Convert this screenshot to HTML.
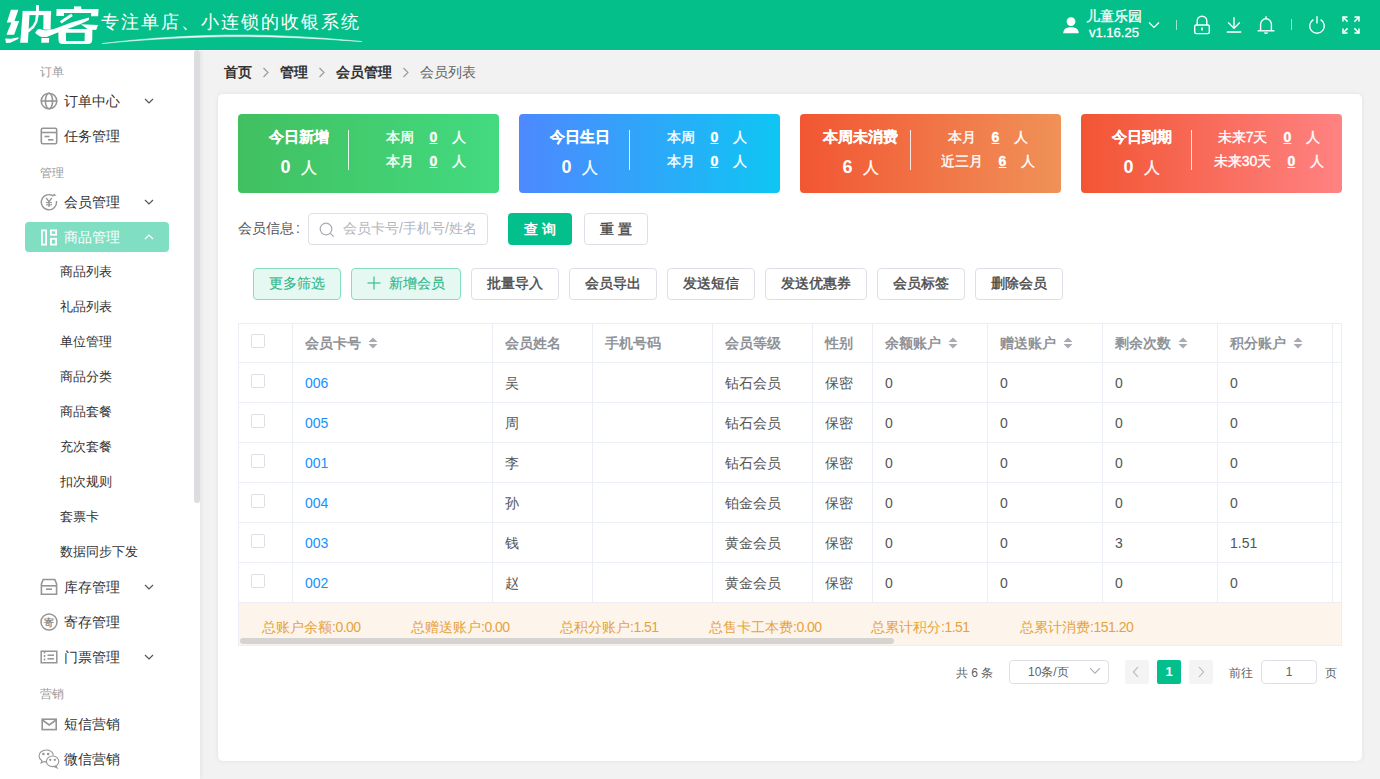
<!DOCTYPE html>
<html><head><meta charset="utf-8">
<style>
*{box-sizing:border-box;margin:0;padding:0}
html,body{width:1380px;height:779px;overflow:hidden;background:#f2f2f2;font-family:"Liberation Sans",sans-serif;color:#333}
div,span,svg{position:absolute}
span.i{position:static}
#hdr{left:0;top:0;width:1380px;height:50px;background:#05bf8a}
#side{left:0;top:50px;width:200px;height:729px;background:#fff;box-shadow:1px 0 4px rgba(0,0,0,.07)}
#sbar{left:194px;top:50px;width:6px;height:453px;background:#dcdde0;border-radius:3px}
.sec{left:40px;font-size:12px;color:#999;line-height:12px;white-space:nowrap}
.mt{left:64px;font-size:14px;color:#333;line-height:14px;white-space:nowrap}
.sub{left:60px;font-size:13px;color:#333;line-height:13px;white-space:nowrap}
#card{left:218px;top:94px;width:1144px;height:667px;background:#fff;border-radius:5px;box-shadow:0 0 5px rgba(0,0,0,.07)}
.stat{top:114px;width:261px;height:79px;border-radius:4px;color:#fff}
.stat .l1{left:0;width:121px;text-align:center;top:14.5px;font-size:15px;font-weight:bold;line-height:15px;white-space:nowrap;-webkit-text-stroke:0.15px #fff}
.stat .l2{left:0;width:121px;text-align:center;top:45px;font-size:17px;line-height:17px;white-space:nowrap}
.stat .l2 b{font-size:18px}
.stat .l2 span{position:static;font-size:16px;margin-left:10px;-webkit-text-stroke:0.3px #fff}
.stat .dv{left:110px;top:16px;width:1px;height:40px;background:rgba(255,255,255,.85)}
.stat .r{left:111px;width:154px;font-size:14px;line-height:14px;text-align:center;white-space:nowrap;-webkit-text-stroke:0.35px #fff}
.stat u{position:static;text-decoration:underline;font-weight:bold;display:inline-block;margin:0 15px 0 16px}
.btn{top:268px;height:32px;border:1px solid #dcdfe6;border-radius:4px;background:#fff;font-size:14px;color:#4a4a4a;text-align:center;line-height:29px;font-weight:400;-webkit-text-stroke:0.4px currentColor;white-space:nowrap}
.btn.g{background:#e6f8f2;border-color:#86ddbf;color:#2db587;-webkit-text-stroke:0.1px currentColor}
.cell{font-size:14px;line-height:14px;white-space:nowrap;color:#555}
.hd{font-size:14px;line-height:14px;white-space:nowrap;color:#8f9297;font-weight:bold}
.hl{height:1px;background:#ebeef5}
.vl{width:1px;background:#ebeef5}
.cb{width:14px;height:14px;border:1px solid #dcdfe6;border-radius:2px;background:#fff}
.ft{top:620px;font-size:14px;line-height:14px;color:#e6a23c;white-space:nowrap}
</style></head><body>
<div id="side"></div>
<div id="hdr"></div>
<div style="left:200px;top:50px;width:1180px;height:1px;background:#fbf5f7"></div>
<div id="sbar"></div>
<div id="card"></div>


<!-- HEADER -->
<svg style="left:0;top:0" width="100" height="50" viewBox="0 0 100 50"><g fill="#fff">
<polygon points="10.9,9.7 18.4,9.7 14.5,20.9 19.2,20.9 14.1,34.8 6.4,34.8 11.4,22.4 6.8,22.4"/>
<polygon points="5.2,38.5 10.9,38.7 18.8,37.3 18.2,38.9 10.3,42.7 6,42.9"/>
<polygon points="22.8,10.9 29.7,10.9 27.9,42.7 20.2,42.7"/>
<rect x="22.8" y="10.9" width="28.3" height="4.2"/>
<rect x="36.1" y="5" width="2.8" height="6"/>
<polygon points="35.8,15.1 38.7,15.1 37.4,22.1 33.9,28 28.3,32.7 28,29.7 32.7,25.6 35.1,20.9"/>
<polygon points="43.5,15 50.9,15 50.6,29.8 43.3,29.5"/>
<polygon points="41.4,38.1 49.2,38.1 48.9,42.7 41.3,42.7"/>
<path d="M35.1,32.8 C36.5,30.5 37.8,28.9 39,28.9 C41,29.2 43.5,30.3 46,30.2 C50,30 53,29.2 56,28.2 L70.6,22.7 L88.9,17.4 L88.9,20.1 L80.7,24 L67.5,28.9 L58.4,32.3 L46.7,36.9 C44,37.3 42,37 40.1,36.4 C38,35.5 36.5,34.3 35.1,32.8 Z"/>
<rect x="74" y="6.4" width="7.2" height="3.3"/>
<polygon points="56.6,9.1 98.5,9.1 98.2,16.2 91.1,16.2 91.1,12.9 63.9,12.9 63.9,15.9 56.3,15.9"/>
<polygon points="59.8,21.2 71.1,13.8 72.8,15.9 61.5,23.5"/>
<polygon points="80.7,24.3 98,25 96.2,30 88.5,29.6 86.5,28.3"/>
<path fill-rule="evenodd" d="M58.3,32.3 L65.5,28.9 L92.4,28.9 L92.2,40 Q92,44 88,44 L62.5,44 Q58.6,44 58.5,40 Z M65.9,32.8 L84.8,32.8 L84.6,41 L66.1,41 Z"/>
</g></svg>
<div style="left:101px;top:12px;font-family:'Liberation Serif',serif;font-size:18px;line-height:20px;color:#fff;white-space:nowrap;letter-spacing:2px">专注单店、小连锁的收银系统</div>
<svg style="left:0;top:0" width="400" height="50" viewBox="0 0 400 50"><path d="M102,43.6 C150,37.5 200,35 240,35 C290,35.2 330,38.5 362,41.6 C330,39.4 290,36.6 240,36.6 C200,36.6 150,38.8 102,43.6 Z" fill="#fff" stroke="#fff" stroke-width="0.5" opacity=".92"/></svg>

<svg style="left:1063px;top:17px" width="16" height="17" viewBox="0 0 16 17" fill="#fff"><circle cx="8" cy="4.6" r="4.4"/><path d="M0.3 16.2 C0.3 12.2 3 10.2 8 10.2 C13 10.2 15.7 12.2 15.7 16.2 Z"/></svg>
<div style="left:1086px;top:9px;font-size:14px;line-height:14px;color:#fff;white-space:nowrap;-webkit-text-stroke:0.3px #fff">儿童乐园</div>
<div style="left:1089px;top:26px;font-size:13px;line-height:13px;color:#fff;white-space:nowrap;-webkit-text-stroke:0.3px #fff">v1.16.25</div>
<svg style="left:1148px;top:21px" width="12" height="8" viewBox="0 0 12 8" fill="none" stroke="#fff" stroke-width="1.2"><polyline points="1,1.5 6,6.5 11,1.5"/></svg>
<div style="left:1176px;top:20px;width:1px;height:10px;background:rgba(255,255,255,.6)"></div>
<svg style="left:1193px;top:15px" width="18" height="20" viewBox="0 0 18 20" fill="none" stroke="#fff" stroke-width="1.4"><path d="M4.2 10 V6 A4.8 4.8 0 0 1 13.8 6 V10"/><rect x="1.7" y="10" width="14.6" height="8.6" rx="1.6"/><line x1="9" y1="12.6" x2="9" y2="15.6" stroke-width="1.6"/></svg>
<svg style="left:1225px;top:16px" width="18" height="18" viewBox="0 0 18 18" fill="none" stroke="#fff" stroke-width="1.4"><line x1="9" y1="1.2" x2="9" y2="12"/><polyline points="3.2,6.6 9,12.2 14.8,6.6"/><line x1="1.8" y1="16" x2="16.2" y2="16" stroke-width="1.6"/></svg>
<svg style="left:1256px;top:15px" width="20" height="20" viewBox="0 0 20 20" fill="none" stroke="#fff" stroke-width="1.4"><path d="M4.6 15.6 V9.2 A5.4 5.4 0 0 1 15.4 9.2 V15.6"/><line x1="1.6" y1="15.8" x2="18.4" y2="15.8"/><path d="M8.4 17.4 Q10 19 11.6 17.4" /><line x1="10" y1="1.2" x2="10" y2="3.6"/></svg>
<div style="left:1291px;top:19px;width:1px;height:11px;background:rgba(255,255,255,.6)"></div>
<svg style="left:1307px;top:15px" width="20" height="20" viewBox="0 0 20 20" fill="none" stroke="#fff" stroke-width="1.4"><path d="M6.4 4.6 A7.3 7.3 0 1 0 13.6 4.6"/><line x1="10" y1="1.2" x2="10" y2="8.6"/></svg>
<svg style="left:1342px;top:16px" width="18" height="18" viewBox="0 0 18 18" fill="none" stroke="#fff" stroke-width="1.5"><polyline points="1,5.5 1,1 5.5,1"/><line x1="1" y1="1" x2="5.6" y2="5.6"/><polyline points="12.5,1 17,1 17,5.5"/><line x1="17" y1="1" x2="12.4" y2="5.6"/><polyline points="1,12.5 1,17 5.5,17"/><line x1="1" y1="17" x2="5.6" y2="12.4"/><polyline points="12.5,17 17,17 17,12.5"/><line x1="17" y1="17" x2="12.4" y2="12.4"/></svg>


<!-- CRUMB -->
<div style="left:224px;top:65px;font-size:14px;line-height:14px;white-space:nowrap;color:#333;font-weight:bold">首页</div>
<svg style="left:262px;top:67px" width="8" height="11" viewBox="0 0 8 11" fill="none" stroke="#999" stroke-width="1.1"><polyline points="1.5,1 6,5.5 1.5,10"/></svg>
<div style="left:280px;top:65px;font-size:14px;line-height:14px;white-space:nowrap;color:#333;font-weight:bold">管理</div>
<svg style="left:318px;top:67px" width="8" height="11" viewBox="0 0 8 11" fill="none" stroke="#999" stroke-width="1.1"><polyline points="1.5,1 6,5.5 1.5,10"/></svg>
<div style="left:336px;top:65px;font-size:14px;line-height:14px;white-space:nowrap;color:#333;font-weight:bold">会员管理</div>
<svg style="left:402px;top:67px" width="8" height="11" viewBox="0 0 8 11" fill="none" stroke="#999" stroke-width="1.1"><polyline points="1.5,1 6,5.5 1.5,10"/></svg>
<div style="left:420px;top:65px;font-size:14px;line-height:14px;white-space:nowrap;color:#666">会员列表</div>

<!-- STATS -->
<div class="stat" style="left:238px;background:linear-gradient(90deg,#41c060,#43da80)">
<div class="l1">今日新增</div>
<div class="l2"><b>0</b><span>人</span></div>
<div class="dv"></div>
<div class="r" style="top:16px">本周<u>0</u>人</div>
<div class="r" style="top:40px">本月<u>0</u>人</div>
</div>
<div class="stat" style="left:519px;background:linear-gradient(90deg,#4e88ff,#0ec6f3)">
<div class="l1">今日生日</div>
<div class="l2"><b>0</b><span>人</span></div>
<div class="dv"></div>
<div class="r" style="top:16px">本周<u>0</u>人</div>
<div class="r" style="top:40px">本月<u>0</u>人</div>
</div>
<div class="stat" style="left:800px;background:linear-gradient(90deg,#f25633,#f09158)">
<div class="l1">本周未消费</div>
<div class="l2"><b>6</b><span>人</span></div>
<div class="dv"></div>
<div class="r" style="top:16px">本月<u>6</u>人</div>
<div class="r" style="top:40px">近三月<u>6</u>人</div>
</div>
<div class="stat" style="left:1081px;background:linear-gradient(90deg,#f25533,#ff8282)">
<div class="l1">今日到期</div>
<div class="l2"><b>0</b><span>人</span></div>
<div class="dv"></div>
<div class="r" style="top:16px">未来7天<u>0</u>人</div>
<div class="r" style="top:40px">未来30天<u>0</u>人</div>
</div>


<!-- SEARCH -->
<div style="left:238px;top:221px;font-size:14px;line-height:14px;color:#555;white-space:nowrap">会员信息<span class="i" style="margin-left:2px">:</span></div>
<div style="left:308px;top:213px;width:180px;height:32px;border:1px solid #dcdfe6;border-radius:4px;background:#fff"></div>
<svg style="left:319px;top:222px" width="16" height="16" viewBox="0 0 16 16" fill="none" stroke="#a8abb2" stroke-width="1.2"><circle cx="7" cy="7" r="5.8"/><line x1="11.2" y1="11.2" x2="14.6" y2="14.6"/></svg>
<div style="left:343px;top:221px;font-size:14px;line-height:14px;color:#b3b6bd;white-space:nowrap">会员卡号/手机号/姓名</div>
<div style="left:508px;top:213px;width:64px;height:32px;border-radius:4px;background:#03bf8b;color:#fff;font-weight:bold;font-size:14px;line-height:32px;text-align:center;white-space:nowrap">查 询</div>
<div style="left:584px;top:213px;width:64px;height:32px;border:1px solid #dcdfe6;border-radius:4px;background:#fff;color:#4a4a4a;-webkit-text-stroke:0.4px currentColor;font-size:14px;line-height:30px;text-align:center;white-space:nowrap">重 置</div>

<!-- TOOLBAR -->
<div class="btn g" style="left:253px;width:88px">更多筛选</div>
<div class="btn g" style="left:351px;width:110px"><span class="i" style="display:inline-block;width:14px;height:14px;position:relative;top:2px;margin-right:8px"><svg style="left:0;top:0" width="14" height="14" viewBox="0 0 14 14" stroke="#44c194" stroke-width="1.3"><line x1="7" y1="0.5" x2="7" y2="13.5"/><line x1="0.5" y1="7" x2="13.5" y2="7"/></svg></span>新增会员</div>
<div class="btn" style="left:471px;width:88px">批量导入</div>
<div class="btn" style="left:569px;width:88px">会员导出</div>
<div class="btn" style="left:667px;width:88px">发送短信</div>
<div class="btn" style="left:765px;width:102px">发送优惠券</div>
<div class="btn" style="left:877px;width:88px">会员标签</div>
<div class="btn" style="left:975px;width:88px">删除会员</div>

<!-- TABLE -->
<div style="left:238px;top:323px;width:1104px;height:280px;background:#fff"></div>
<div style="left:238px;top:602px;width:1104px;height:43px;background:#fdf5ec"></div>
<div class="hl" style="left:238px;top:323px;width:1104px"></div>
<div class="hl" style="left:238px;top:362px;width:1104px"></div>
<div class="hl" style="left:238px;top:402px;width:1104px"></div>
<div class="hl" style="left:238px;top:442px;width:1104px"></div>
<div class="hl" style="left:238px;top:482px;width:1104px"></div>
<div class="hl" style="left:238px;top:522px;width:1104px"></div>
<div class="hl" style="left:238px;top:562px;width:1104px"></div>
<div class="hl" style="left:238px;top:602px;width:1104px"></div>
<div class="hl" style="left:238px;top:645px;width:1104px"></div>
<div class="vl" style="left:238px;top:323px;height:323px"></div>
<div class="vl" style="left:292px;top:323px;height:279px"></div>
<div class="vl" style="left:492px;top:323px;height:279px"></div>
<div class="vl" style="left:592px;top:323px;height:279px"></div>
<div class="vl" style="left:712px;top:323px;height:279px"></div>
<div class="vl" style="left:812px;top:323px;height:279px"></div>
<div class="vl" style="left:872px;top:323px;height:279px"></div>
<div class="vl" style="left:987px;top:323px;height:279px"></div>
<div class="vl" style="left:1102px;top:323px;height:279px"></div>
<div class="vl" style="left:1217px;top:323px;height:279px"></div>
<div class="vl" style="left:1332px;top:323px;height:279px"></div>
<div class="vl" style="left:1341px;top:323px;height:323px"></div>
<div class="cb" style="left:251px;top:334px"></div>
<div class="hd" style="left:305px;top:336px">会员卡号</div>
<svg style="left:368px;top:337px" width="10" height="12" viewBox="0 0 10 12" fill="#a8abb2"><path d="M5 0.5 L9.5 5 H0.5 Z"/><path d="M5 11.5 L9.5 7 H0.5 Z"/></svg>
<div class="hd" style="left:505px;top:336px">会员姓名</div>
<div class="hd" style="left:605px;top:336px">手机号码</div>
<div class="hd" style="left:725px;top:336px">会员等级</div>
<div class="hd" style="left:825px;top:336px">性别</div>
<div class="hd" style="left:885px;top:336px">余额账户</div>
<svg style="left:948px;top:337px" width="10" height="12" viewBox="0 0 10 12" fill="#a8abb2"><path d="M5 0.5 L9.5 5 H0.5 Z"/><path d="M5 11.5 L9.5 7 H0.5 Z"/></svg>
<div class="hd" style="left:1000px;top:336px">赠送账户</div>
<svg style="left:1063px;top:337px" width="10" height="12" viewBox="0 0 10 12" fill="#a8abb2"><path d="M5 0.5 L9.5 5 H0.5 Z"/><path d="M5 11.5 L9.5 7 H0.5 Z"/></svg>
<div class="hd" style="left:1115px;top:336px">剩余次数</div>
<svg style="left:1178px;top:337px" width="10" height="12" viewBox="0 0 10 12" fill="#a8abb2"><path d="M5 0.5 L9.5 5 H0.5 Z"/><path d="M5 11.5 L9.5 7 H0.5 Z"/></svg>
<div class="hd" style="left:1230px;top:336px">积分账户</div>
<svg style="left:1293px;top:337px" width="10" height="12" viewBox="0 0 10 12" fill="#a8abb2"><path d="M5 0.5 L9.5 5 H0.5 Z"/><path d="M5 11.5 L9.5 7 H0.5 Z"/></svg>
<div class="cb" style="left:251px;top:374px"></div>
<div class="cell" style="left:305px;top:376px;color:#1890ff">006</div>
<div class="cell" style="left:505px;top:376px">吴</div>
<div class="cell" style="left:725px;top:376px">钻石会员</div>
<div class="cell" style="left:825px;top:376px">保密</div>
<div class="cell" style="left:885px;top:376px">0</div>
<div class="cell" style="left:1000px;top:376px">0</div>
<div class="cell" style="left:1115px;top:376px">0</div>
<div class="cell" style="left:1230px;top:376px">0</div>
<div class="cb" style="left:251px;top:414px"></div>
<div class="cell" style="left:305px;top:416px;color:#1890ff">005</div>
<div class="cell" style="left:505px;top:416px">周</div>
<div class="cell" style="left:725px;top:416px">钻石会员</div>
<div class="cell" style="left:825px;top:416px">保密</div>
<div class="cell" style="left:885px;top:416px">0</div>
<div class="cell" style="left:1000px;top:416px">0</div>
<div class="cell" style="left:1115px;top:416px">0</div>
<div class="cell" style="left:1230px;top:416px">0</div>
<div class="cb" style="left:251px;top:454px"></div>
<div class="cell" style="left:305px;top:456px;color:#1890ff">001</div>
<div class="cell" style="left:505px;top:456px">李</div>
<div class="cell" style="left:725px;top:456px">钻石会员</div>
<div class="cell" style="left:825px;top:456px">保密</div>
<div class="cell" style="left:885px;top:456px">0</div>
<div class="cell" style="left:1000px;top:456px">0</div>
<div class="cell" style="left:1115px;top:456px">0</div>
<div class="cell" style="left:1230px;top:456px">0</div>
<div class="cb" style="left:251px;top:494px"></div>
<div class="cell" style="left:305px;top:496px;color:#1890ff">004</div>
<div class="cell" style="left:505px;top:496px">孙</div>
<div class="cell" style="left:725px;top:496px">铂金会员</div>
<div class="cell" style="left:825px;top:496px">保密</div>
<div class="cell" style="left:885px;top:496px">0</div>
<div class="cell" style="left:1000px;top:496px">0</div>
<div class="cell" style="left:1115px;top:496px">0</div>
<div class="cell" style="left:1230px;top:496px">0</div>
<div class="cb" style="left:251px;top:534px"></div>
<div class="cell" style="left:305px;top:536px;color:#1890ff">003</div>
<div class="cell" style="left:505px;top:536px">钱</div>
<div class="cell" style="left:725px;top:536px">黄金会员</div>
<div class="cell" style="left:825px;top:536px">保密</div>
<div class="cell" style="left:885px;top:536px">0</div>
<div class="cell" style="left:1000px;top:536px">0</div>
<div class="cell" style="left:1115px;top:536px">3</div>
<div class="cell" style="left:1230px;top:536px">1.51</div>
<div class="cb" style="left:251px;top:574px"></div>
<div class="cell" style="left:305px;top:576px;color:#1890ff">002</div>
<div class="cell" style="left:505px;top:576px">赵</div>
<div class="cell" style="left:725px;top:576px">黄金会员</div>
<div class="cell" style="left:825px;top:576px">保密</div>
<div class="cell" style="left:885px;top:576px">0</div>
<div class="cell" style="left:1000px;top:576px">0</div>
<div class="cell" style="left:1115px;top:576px">0</div>
<div class="cell" style="left:1230px;top:576px">0</div>
<div class="ft" style="left:262px">总账户余额<span class="i" style="letter-spacing:-0.5px">:0.00</span></div>
<div class="ft" style="left:411px">总赠送账户<span class="i" style="letter-spacing:-0.5px">:0.00</span></div>
<div class="ft" style="left:560px">总积分账户<span class="i" style="letter-spacing:-0.5px">:1.51</span></div>
<div class="ft" style="left:709px">总售卡工本费<span class="i" style="letter-spacing:-0.5px">:0.00</span></div>
<div class="ft" style="left:871px">总累计积分<span class="i" style="letter-spacing:-0.5px">:1.51</span></div>
<div class="ft" style="left:1020px">总累计消费<span class="i" style="letter-spacing:-0.5px">:151.20</span></div>
<div style="left:240px;top:638px;width:654px;height:6px;border-radius:3px;background:#d6d4d1"></div>

<!-- PAGINATION -->
<div style="left:956px;top:667px;font-size:12px;line-height:12px;color:#606266;white-space:nowrap">共 6 条</div>
<div style="left:1009px;top:660px;width:100px;height:24px;border:1px solid #dcdfe6;border-radius:4px;background:#fff"></div>
<div style="left:1028px;top:666px;font-size:12px;line-height:12px;color:#606266;white-space:nowrap">10条/页</div>
<svg style="left:1089px;top:667px" width="12" height="8" viewBox="0 0 12 8" fill="none" stroke="#a8abb2" stroke-width="1.1"><polyline points="1,1.2 6,6.2 11,1.2"/></svg>
<div style="left:1125px;top:660px;width:24px;height:24px;border-radius:2px;background:#f4f4f5"></div>
<svg style="left:1132px;top:666px" width="8" height="12" viewBox="0 0 8 12" fill="none" stroke="#b0b3b8" stroke-width="1.1"><polyline points="6,1 1.5,6 6,11"/></svg>
<div style="left:1157px;top:660px;width:24px;height:24px;border-radius:2px;background:#03bf8b;color:#fff;font-size:13px;font-weight:bold;line-height:24px;text-align:center">1</div>
<div style="left:1189px;top:660px;width:24px;height:24px;border-radius:2px;background:#f4f4f5"></div>
<svg style="left:1197px;top:666px" width="8" height="12" viewBox="0 0 8 12" fill="none" stroke="#b0b3b8" stroke-width="1.1"><polyline points="2,1 6.5,6 2,11"/></svg>
<div style="left:1229px;top:667px;font-size:12px;line-height:12px;color:#606266;white-space:nowrap">前往</div>
<div style="left:1261px;top:660px;width:56px;height:24px;border:1px solid #dcdfe6;border-radius:4px;background:#fff;font-size:12px;line-height:22px;text-align:center;color:#606266">1</div>
<div style="left:1325px;top:667px;font-size:12px;line-height:12px;color:#606266;white-space:nowrap">页</div>

<!-- SIDEBAR -->
<div class="sec" style="top:66px">订单</div>
<svg style="left:40px;top:92px" width="18" height="18" viewBox="0 0 18 18" fill="none" stroke="#959595" stroke-width="1.6"><circle cx="9" cy="9" r="7.8"/><ellipse cx="9" cy="9" rx="3.6" ry="7.8"/><line x1="1.2" y1="9" x2="16.8" y2="9"/></svg>
<div class="mt" style="top:94px">订单中心</div>
<svg style="left:144px;top:98px" width="10" height="6" viewBox="0 0 10 6" fill="none" stroke="#555" stroke-width="1.2"><polyline points="1,1 5,5 9,1"/></svg>
<svg style="left:40px;top:127px" width="18" height="18" viewBox="0 0 18 18" fill="none" stroke="#959595" stroke-width="1.6"><rect x="1.3" y="1.3" width="15.4" height="15.4" rx="1.5"/><line x1="1.3" y1="5.5" x2="16.7" y2="5.5"/><line x1="4.5" y1="9.5" x2="9.5" y2="9.5"/><line x1="8" y1="12.8" x2="13.5" y2="12.8"/></svg>
<div class="mt" style="top:129px">任务管理</div>

<div class="sec" style="top:167px">管理</div>
<svg style="left:40px;top:193px" width="18" height="18" viewBox="0 0 18 18" fill="none" stroke="#959595" stroke-width="1.4"><path d="M13.5 3.2 A7.6 7.6 0 1 0 16.4 8"/><polyline points="10.5,2.3 15.2,2.3 13.6,0.8" stroke-width="1.1"/><polyline points="6.2,5 9,8.6 11.8,5" stroke-width="1.3"/><line x1="9" y1="8.6" x2="9" y2="14" stroke-width="1.3"/><line x1="6" y1="9.6" x2="12" y2="9.6" stroke-width="1.1"/><line x1="6" y1="11.8" x2="12" y2="11.8" stroke-width="1.1"/></svg>
<div class="mt" style="top:195px">会员管理</div>
<svg style="left:144px;top:199px" width="10" height="6" viewBox="0 0 10 6" fill="none" stroke="#555" stroke-width="1.2"><polyline points="1,1 5,5 9,1"/></svg>

<div style="left:25px;top:222px;width:144px;height:30px;background:#80dec3;border-radius:4px"></div>
<svg style="left:40px;top:229px" width="18" height="17" viewBox="0 0 18 17" fill="none" stroke="#fff" stroke-width="1.8"><rect x="1.9" y="1.4" width="4.2" height="14.2"/><rect x="10.9" y="1.4" width="5.2" height="4.4"/><rect x="10.9" y="9.8" width="5.2" height="5.8"/></svg>
<div class="mt" style="top:230px;color:#fff">商品管理</div>
<svg style="left:144px;top:234px" width="10" height="6" viewBox="0 0 10 6" fill="none" stroke="#fff" stroke-width="1.2"><polyline points="1,5 5,1 9,5"/></svg>

<div class="sub" style="top:265px">商品列表</div>
<div class="sub" style="top:300px">礼品列表</div>
<div class="sub" style="top:335px">单位管理</div>
<div class="sub" style="top:370px">商品分类</div>
<div class="sub" style="top:405px">商品套餐</div>
<div class="sub" style="top:440px">充次套餐</div>
<div class="sub" style="top:475px">扣次规则</div>
<div class="sub" style="top:510px">套票卡</div>
<div class="sub" style="top:545px">数据同步下发</div>

<svg style="left:40px;top:578px" width="18" height="18" viewBox="0 0 18 18" fill="none" stroke="#959595" stroke-width="1.6"><path d="M3.2 1.5 H14.8 L16.6 6 V16.2 H1.4 V6 Z"/><line x1="1.4" y1="7.8" x2="16.6" y2="7.8"/><line x1="6" y1="11.2" x2="12" y2="11.2"/></svg>
<div class="mt" style="top:580px">库存管理</div>
<svg style="left:144px;top:584px" width="10" height="6" viewBox="0 0 10 6" fill="none" stroke="#555" stroke-width="1.2"><polyline points="1,1 5,5 9,1"/></svg>

<svg style="left:40px;top:613px" width="18" height="18" viewBox="0 0 18 18" fill="none" stroke="#959595" stroke-width="1.5"><circle cx="9" cy="9" r="8"/><text x="9" y="13" font-size="10" text-anchor="middle" fill="#8c8c8c" stroke="none" font-weight="bold">寄</text></svg>
<div class="mt" style="top:615px">寄存管理</div>

<svg style="left:40px;top:649px" width="18" height="16" viewBox="0 0 18 16" fill="none" stroke="#959595" stroke-width="1.5"><path d="M1.2 2.2 H16.8 V13.8 H1.2 Z"/><line x1="4.5" y1="2.5" x2="4.5" y2="13.5" stroke-dasharray="2 1.5"/><line x1="7.5" y1="6.2" x2="14" y2="6.2"/><line x1="7.5" y1="9.8" x2="14" y2="9.8"/></svg>
<div class="mt" style="top:650px">门票管理</div>
<svg style="left:144px;top:654px" width="10" height="6" viewBox="0 0 10 6" fill="none" stroke="#555" stroke-width="1.2"><polyline points="1,1 5,5 9,1"/></svg>

<div class="sec" style="top:688px">营销</div>
<svg style="left:40px;top:717px" width="18" height="14" viewBox="0 0 18 14" fill="none" stroke="#959595" stroke-width="1.6"><rect x="2.2" y="2.2" width="14" height="10.4"/><polyline points="2.4,3 9.2,8 16,3"/></svg>
<div class="mt" style="top:717px">短信营销</div>
<svg style="left:38px;top:749px" width="22" height="20" viewBox="0 0 22 20" fill="none" stroke="#959595" stroke-width="1.1"><path d="M15.5 6.5 C14.8 3.3 11.8 1 8.2 1 C4.2 1 1 3.7 1 7 C1 9 2.2 10.6 3.9 11.7 L3.2 14 L6 12.6 C6.8 12.8 7.6 12.9 8.4 12.9"/><ellipse cx="14.6" cy="12.3" rx="6.2" ry="5.3"/><path d="M17.8 17 L19 18.8 L16 17.4"/><circle cx="5.4" cy="5" r="0.7" fill="#8c8c8c"/><circle cx="10.2" cy="5" r="0.7" fill="#8c8c8c"/><circle cx="12.3" cy="10.8" r="0.6" fill="#8c8c8c"/><circle cx="16.8" cy="10.8" r="0.6" fill="#8c8c8c"/></svg>
<div class="mt" style="top:752px">微信营销</div>

</body></html>
